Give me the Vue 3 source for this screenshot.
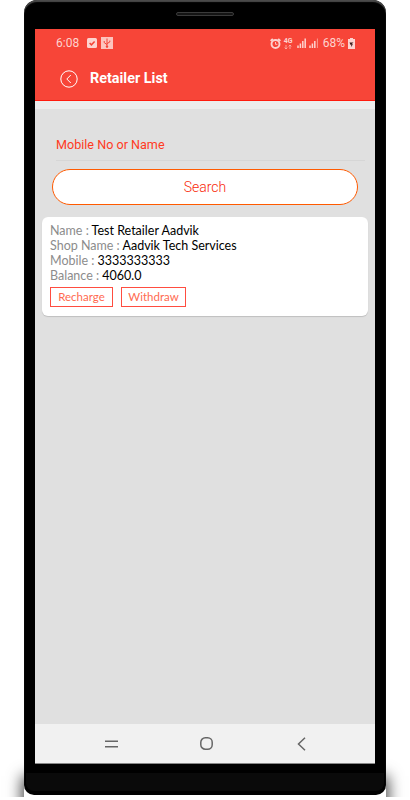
<template>
  <div class="page">
    <div class="shade"><div class="shade-box"></div></div>
    <div class="phone">
      <div class="speaker"></div>
      <div class="chin"></div>
      <div class="screen">
        <header class="appbar">
          <div class="status">
            <span class="time">6:08</span>
            <svg class="check" width="10" height="10" viewBox="0 0 10 10">
              <rect width="10" height="10" rx="1.5" fill="#fdd3cf" />
              <path d="M2.6 5 L4.4 6.8 L7.6 3.4" fill="none" stroke="#f44336" stroke-width="1.5" />
            </svg>
            <svg class="usb" width="12" height="12" viewBox="0 0 12 12">
              <rect width="12" height="12" fill="#fdc4be" />
              <path d="M6 1.5 V10.5 M3.2 4 V5.6 L6 7.6 M8.8 3.6 V5 L6 6.6" fill="none" stroke="#f44336" stroke-width="1" />
              <circle cx="6" cy="9.6" r="1.2" fill="#f44336" />
            </svg>
            <span class="spacer"></span>
            <svg class="alarm" width="11" height="11" viewBox="0 0 11 11">
              <circle cx="5.5" cy="6" r="4" fill="none" stroke="#fdd3cf" stroke-width="1.9" />
              <path d="M5.5 4 V6.3 H7.4" fill="none" stroke="#fdd3cf" stroke-width="0.9" />
              <path d="M0.6 2.8 L2.8 0.8 M10.4 2.8 L8.2 0.8" stroke="#fdd3cf" stroke-width="1.8" />
            </svg>
            <span class="net">
              <span class="net-label">4G</span>
              <svg width="8" height="4" viewBox="0 0 8 4">
                <path d="M2 0V4 M0.6 2.6L2 4L3.4 2.6 M6 4V0 M4.6 1.4L6 0L7.4 1.4" fill="none" stroke="#fdb9b2" stroke-width="0.8" />
              </svg>
            </span>
            <svg class="bars" width="9" height="10" viewBox="0 0 9 10">
              <path d="M1 10V7.5 M3.4 10V5.5 M5.8 10V3 M8.2 10V0.5" stroke="#fdd3cf" stroke-width="1.5" />
            </svg>
            <svg class="bars" width="9" height="10" viewBox="0 0 9 10">
              <path d="M1 10V7.5 M3.4 10V5.5 M5.8 10V3" stroke="#fdd3cf" stroke-width="1.5" />
              <path d="M8.4 10V0.5" stroke="#fdb0a8" stroke-width="0.8" />
            </svg>
            <span class="pct">68%</span>
            <svg width="7" height="11" viewBox="0 0 7 11">
              <path d="M2 0H5V1H7V11H0V1H2Z" fill="#fdd3cf" />
              <path d="M1.5 4.5H5.5L3.5 6.2H5L3 9L3.3 6.8H2.4Z" fill="#3a1a18" />
            </svg>
          </div>
          <div class="titlebar">
            <svg class="back" width="18" height="18" viewBox="0 0 18 18">
              <circle cx="9" cy="9" r="8.2" fill="none" stroke="#fff" stroke-width="1" />
              <path d="M10.8 5 L6.8 9 L10.8 13" fill="none" stroke="#fff" stroke-width="1" />
            </svg>
            <span class="title">Retailer List</span>
          </div>
        </header>

        <main class="content">
          <div class="strip"></div>
          <div class="form">
            <div class="field">Mobile No or Name</div>
            <button class="search">Search</button>
          </div>

          <div class="card">
            <div v-for="row in rows" :key="row.label" class="row">
              <span class="label">{{ row.label }} : </span>{{ row.value }}
            </div>
            <div class="actions">
              <span class="action recharge">Recharge</span>
              <span class="action withdraw">Withdraw</span>
            </div>
          </div>
        </main>

        <nav class="navbar">
          <svg width="13" height="8" viewBox="0 0 13 8">
            <path d="M0 1.2H13 M0 6.8H13" stroke="#666" stroke-width="1.5" />
          </svg>
          <svg class="home" width="13" height="13" viewBox="0 0 13 13">
            <rect x="0.8" y="0.8" width="11.4" height="11.4" rx="4.5" fill="none" stroke="#666" stroke-width="1.5" />
          </svg>
          <svg class="nav-back" width="9" height="14" viewBox="0 0 9 14">
            <path d="M8 0.8 L1.5 7 L8 13.2" fill="none" stroke="#666" stroke-width="1.5" />
          </svg>
        </nav>
      </div>
    </div>
  </div>
</template>

<script setup>
const rows = [
  { label: 'Name', value: 'Test Retailer Aadvik' },
  { label: 'Shop Name', value: 'Aadvik Tech Services' },
  { label: 'Mobile', value: '3333333333' },
  { label: 'Balance', value: '4060.0' }
]
</script>

<style>
html,
body {
  margin: 0;
  background: #fff;
}
</style>

<style scoped>
.page {
  position: relative;
  width: 410px;
  height: 800px;
  overflow: hidden;
  background: #fff;
  font-family: Roboto, "Liberation Sans", sans-serif;
}

/* soft shadow round the bottom of the phone */
.shade {
  position: absolute;
  top: 740px;
  left: 0;
  width: 410px;
  height: 57px;
  overflow: hidden;
}

.shade-box {
  position: absolute;
  top: 38px;
  left: 24px;
  width: 362px;
  height: 60px;
  box-shadow: 0 0 14px 2px rgba(0, 0, 0, 0.75);
}

.phone {
  position: relative;
  box-sizing: border-box;
  width: 362px;
  height: 795px;
  margin-left: 24px;
  padding: 29px 11px 0;
  background: #000;
  border-radius: 13px 13px 10px 10px;
  box-shadow: inset 0 2px 1px #4a4a4a;
}

.speaker {
  position: absolute;
  top: 12px;
  left: 152px;
  width: 58px;
  height: 4px;
  border-radius: 2px;
  background: #141414;
  border: 1px solid #3a3a3a;
  box-sizing: border-box;
}

.chin {
  position: absolute;
  left: 2px;
  right: 2px;
  bottom: 4px;
  height: 18px;
  border-radius: 0 0 8px 8px;
  background: #0a0a0a;
}

.screen {
  position: relative;
  width: 340px;
  height: 735px;
  display: flex;
  flex-direction: column;
  background: #e0e0e0;
}

.appbar {
  height: 71px;
  background: #f74538;
  border-bottom: 1px solid #ff1a0d;
  flex-shrink: 0;
}

.status {
  height: 28px;
  display: flex;
  align-items: center;
  padding: 0 20px 0 21px;
  color: #fdd3cf;
}

.time {
  font-size: 12px;
  margin-right: 8px;
}

.usb {
  margin-left: 4px;
}

.spacer {
  flex: 1;
}

.alarm {
  margin-right: 3px;
}

.net {
  width: 9px;
  margin-right: 4px;
  display: flex;
  flex-direction: column;
  align-items: center;
  gap: 1px;
}

.net-label {
  font-size: 7px;
  font-weight: 700;
  line-height: 6px;
}

.net svg {
  display: block;
}

.bars {
  margin-right: 3px;
}

.pct {
  font-size: 12px;
  margin: 0 3px 0 2px;
}

.titlebar {
  height: 43px;
  display: flex;
  align-items: center;
  gap: 12px;
  padding-left: 25px;
}

.title {
  font-size: 14.4px;
  font-weight: 700;
  color: #fff;
}

.content {
  flex: 1;
  background: #e0e0e0;
}

.strip {
  height: 8px;
  background: #ececec;
}

.form {
  padding: 26px 17px 0;
}

.field {
  margin: 0 -7px 0 4px;
  height: 25px;
  font-size: 12.6px;
  line-height: 19px;
  color: #ff3a1e;
  border-bottom: 1px solid #d6d6d6;
}

.search {
  display: block;
  box-sizing: border-box;
  width: 306px;
  height: 36px;
  margin-top: 8px;
  padding-top: 1px;
  border: 1px solid #ff5a00;
  border-radius: 18px;
  background: #fff;
  color: #f92a0a;
  font-family: inherit;
  font-size: 14px;
  font-weight: 300;
}

.card {
  box-sizing: border-box;
  width: 326px;
  height: 99px;
  margin: 12px 0 0 7px;
  padding: 6px 8px;
  background: #fff;
  border-radius: 6px;
  box-shadow: 0 1px 1px rgba(0, 0, 0, 0.15);
  font-family: Lato, Roboto, sans-serif;
  font-size: 12.5px;
  line-height: 15px;
  color: #000;
}

.label {
  color: #8c8c8c;
}

.actions {
  display: flex;
  gap: 8px;
  margin-top: 4px;
}

.action {
  box-sizing: border-box;
  height: 20px;
  border: 1px solid #ff4d40;
  font-size: 11.5px;
  line-height: 18px;
  text-align: center;
  color: #ff6a50;
}

.recharge {
  width: 63px;
}

.withdraw {
  width: 65px;
}

.navbar {
  box-sizing: border-box;
  height: 40px;
  flex-shrink: 0;
  display: flex;
  align-items: center;
  justify-content: space-around;
  padding: 0 30px;
  background: #f1f1f1;
  border-bottom: 1px solid #888;
}

.home {
  margin-left: 3px;
}

.nav-back {
  margin-left: 5px;
}
</style>
